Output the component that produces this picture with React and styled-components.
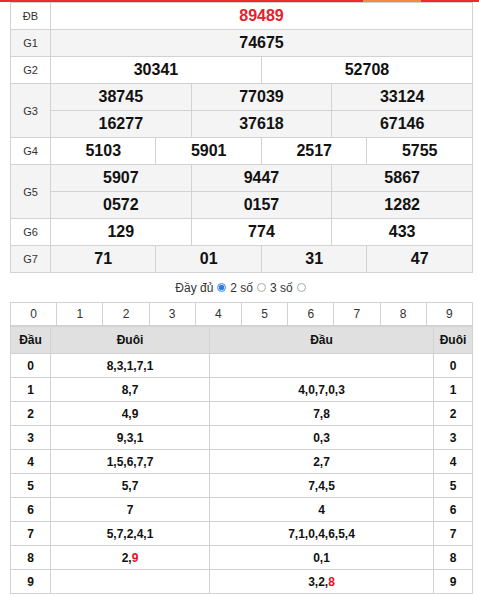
import React from 'react';
import styled, { createGlobalStyle } from 'styled-components';

const GlobalStyle = createGlobalStyle`
  body {
    margin: 0;
    background: #fff;
    font-family: "Liberation Sans", Arial, sans-serif;
    color: #222;
  }
`;

const TopBar = styled.div`
  display: flex;
  height: 2px;
`;

const BarPart = styled.div`
  background: ${(p) => p.color};
  width: ${(p) => (p.w ? `${p.w}px` : 'auto')};
  flex: ${(p) => (p.w ? 'none' : 1)};
`;

const Page = styled.div`
  width: 463px;
  margin-left: 10px;
`;

const Table = styled.table`
  width: 100%;
  border-collapse: collapse;
  table-layout: fixed;

  td, th {
    border: 1px solid #d2d2d2;
    padding: 0;
    text-align: center;
  }
`;

const Row = styled.tr`
  background: ${(p) => (p.shade ? '#f4f4f4' : '#fff')};
  height: ${(p) => p.h || 27}px;
`;

const Label = styled.td`
  font-size: 11px;
  color: #333;
`;

const Num = styled.td`
  font-size: 16px;
  font-weight: bold;
  color: ${(p) => (p.special ? '#e8202a' : '#111')};
`;

const Options = styled.div`
  display: flex;
  justify-content: center;
  align-items: center;
  height: 29px;
  font-size: 12px;
  color: #333;
  gap: 2px;
`;

const Radio = styled.span`
  display: inline-block;
  width: 9px;
  height: 9px;
  border-radius: 50%;
  box-sizing: border-box;
  border: 1px solid ${(p) => (p.checked ? '#4a90e2' : '#a8a8a8')};
  background: ${(p) =>
    p.checked ? 'radial-gradient(circle, #2f7fe0 0 2.5px, #cfe3fb 3px)' : '#fff'};
  margin: 0 2px;
`;

const DigitCell = styled.td`
  font-size: 12px;
  color: #333;
  height: 22px;
`;

const HeadCell = styled.th`
  background: #e0e0e0;
  font-size: 12px;
  font-weight: bold;
  color: #111;
  height: 26px;
`;

const LotoCell = styled.td`
  font-size: 12px;
  font-weight: bold;
  color: #111;
  height: 23px;
`;

const Hot = styled.span`
  color: #e8101e;
`;

const prizes = [
  { label: 'ĐB', shade: false, rows: [[{ v: '89489', span: 12, special: true }]] },
  { label: 'G1', shade: true, rows: [[{ v: '74675', span: 12 }]] },
  { label: 'G2', shade: false, rows: [[{ v: '30341', span: 6 }, { v: '52708', span: 6 }]] },
  {
    label: 'G3',
    shade: true,
    rows: [
      [{ v: '38745', span: 4 }, { v: '77039', span: 4 }, { v: '33124', span: 4 }],
      [{ v: '16277', span: 4 }, { v: '37618', span: 4 }, { v: '67146', span: 4 }],
    ],
  },
  {
    label: 'G4',
    shade: false,
    rows: [[
      { v: '5103', span: 3 }, { v: '5901', span: 3 }, { v: '2517', span: 3 }, { v: '5755', span: 3 },
    ]],
  },
  {
    label: 'G5',
    shade: true,
    rows: [
      [{ v: '5907', span: 4 }, { v: '9447', span: 4 }, { v: '5867', span: 4 }],
      [{ v: '0572', span: 4 }, { v: '0157', span: 4 }, { v: '1282', span: 4 }],
    ],
  },
  { label: 'G6', shade: false, rows: [[{ v: '129', span: 4 }, { v: '774', span: 4 }, { v: '433', span: 4 }]] },
  {
    label: 'G7',
    shade: true,
    rows: [[{ v: '71', span: 3 }, { v: '01', span: 3 }, { v: '31', span: 3 }, { v: '47', span: 3 }]],
  },
];

const loto = [
  { tail: '8,3,1,7,1', head: '' },
  { tail: '8,7', head: '4,0,7,0,3' },
  { tail: '4,9', head: '7,8' },
  { tail: '9,3,1', head: '0,3' },
  { tail: '1,5,6,7,7', head: '2,7' },
  { tail: '5,7', head: '7,4,5' },
  { tail: '7', head: '4' },
  { tail: '5,7,2,4,1', head: '7,1,0,4,6,5,4' },
  { tail: <>2,<Hot>9</Hot></>, head: '0,1' },
  { tail: '', head: <>3,2,<Hot>8</Hot></> },
];

const App = () => {
  return (
    <>
      <GlobalStyle />
      <TopBar>
        <BarPart color="#ee2b2b" w={363} />
        <BarPart color="#f28c3c" w={58} />
        <BarPart color="#ee2b2b" />
      </TopBar>
      <Page>
        <Table>
          <colgroup>
            <col style={{ width: 40 }} />
            {Array.from({ length: 12 }).map((_, i) => (
              <col key={i} />
            ))}
          </colgroup>
          <tbody>
            {prizes.map((p) =>
              p.rows.map((cells, ri) => (
                <Row key={p.label + ri} shade={p.shade}>
                  {ri === 0 && <Label rowSpan={p.rows.length}>{p.label}</Label>}
                  {cells.map((c, ci) => (
                    <Num key={ci} colSpan={c.span} special={c.special}>
                      {c.v}
                    </Num>
                  ))}
                </Row>
              ))
            )}
          </tbody>
        </Table>

        <Options>
          Đầy đủ <Radio checked /> 2 số <Radio /> 3 số <Radio />
        </Options>

        <Table>
          <tbody>
            <tr>
              {Array.from({ length: 10 }).map((_, i) => (
                <DigitCell key={i}>{i}</DigitCell>
              ))}
            </tr>
          </tbody>
        </Table>
        <Table>
          <colgroup>
            <col style={{ width: 40 }} />
            <col style={{ width: 159 }} />
            <col />
            <col style={{ width: 39 }} />
          </colgroup>
          <thead>
            <tr>
              <HeadCell>Đầu</HeadCell>
              <HeadCell>Đuôi</HeadCell>
              <HeadCell>Đầu</HeadCell>
              <HeadCell>Đuôi</HeadCell>
            </tr>
          </thead>
          <tbody>
            {loto.map((r, i) => (
              <tr key={i}>
                <LotoCell>{i}</LotoCell>
                <LotoCell>{r.tail}</LotoCell>
                <LotoCell>{r.head}</LotoCell>
                <LotoCell>{i}</LotoCell>
              </tr>
            ))}
          </tbody>
        </Table>
      </Page>
    </>
  );
};

export default App;
